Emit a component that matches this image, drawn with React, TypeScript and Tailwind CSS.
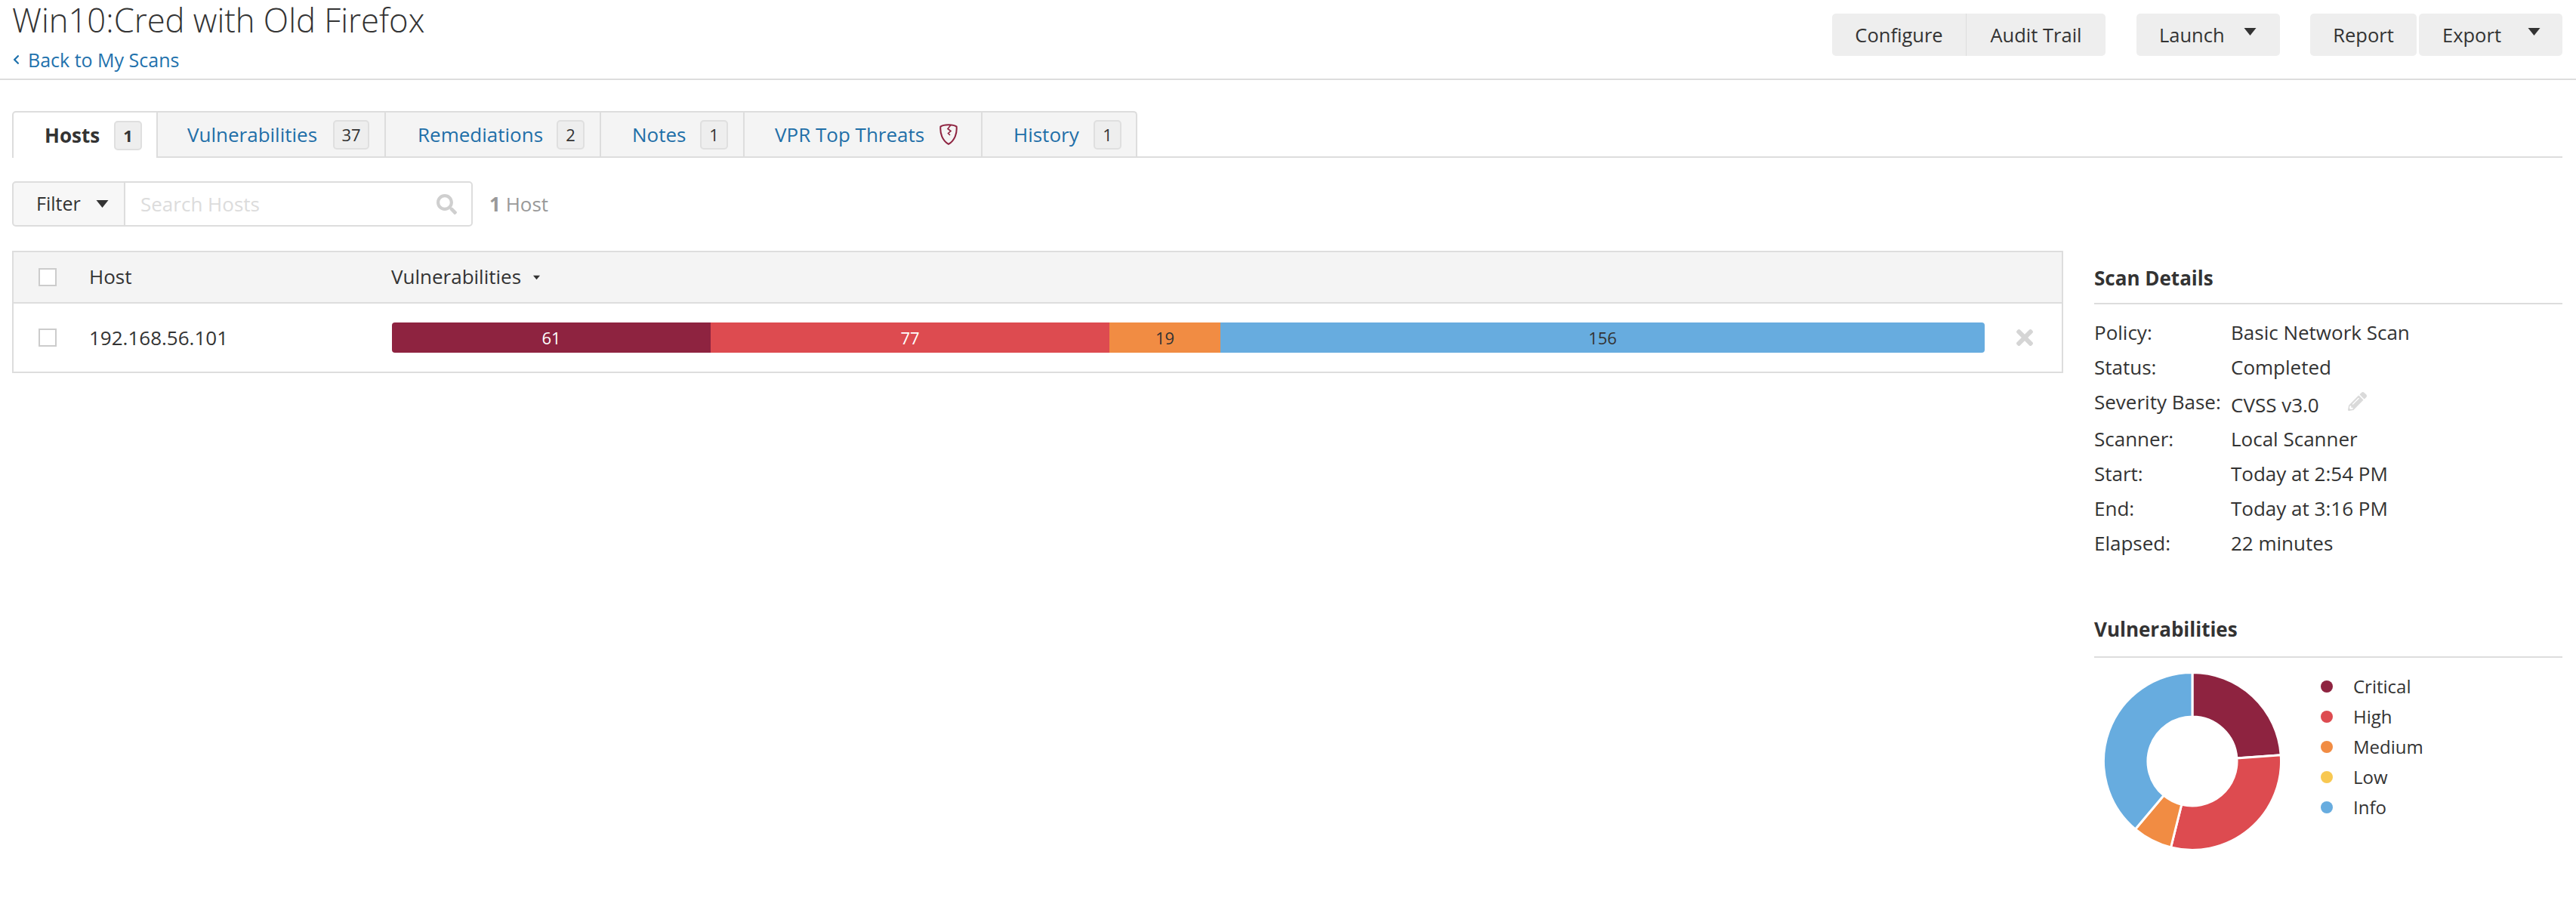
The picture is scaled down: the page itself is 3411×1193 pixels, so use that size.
import { FaChevronLeft, FaPencilAlt, FaSearch, FaTimes } from "react-icons/fa";

const Caret = ({ className = "" }: { className?: string }) => (
  <svg viewBox="0 0 16 12" className={className} fill="currentColor">
    <path d="M0 1 H16 L8 11 Z" />
  </svg>
);

const Badge = ({ n, bold, w = "w-[37px]" }: { n: string; bold?: boolean; w?: string }) => (
  <span
    className={`${w} ml-auto h-[39px] flex items-center justify-center rounded-[5px] border-2 border-[#dfdfdf] bg-[#eeeeee] text-[22px] text-[#333333] ${bold ? "font-bold" : ""}`}
  >
    {n}
  </span>
);

const Shield = () => (
  <svg viewBox="0 0 24 28" className="ml-auto w-[24px] h-[28px]" fill="none" stroke="#8e2340" strokeWidth="2">
    <path d="M12 1.2 C7.5 1.2 3.5 2 1.4 3.6 C0.6 12 3.5 22 12 26.8 C20.5 22 23.4 12 22.6 3.6 C20.5 2 16.5 1.2 12 1.2 Z" />
    <path d="M15 1.6 L11 6.5 L15 9.5 L11.5 12.5 L14 15" strokeWidth="1.6" />
  </svg>
);

const details = [
  { label: "Policy:", value: "Basic Network Scan" },
  { label: "Status:", value: "Completed" },
  { label: "Severity Base:", value: "CVSS v3.0", edit: true },
  { label: "Scanner:", value: "Local Scanner" },
  { label: "Start:", value: "Today at 2:54 PM" },
  { label: "End:", value: "Today at 3:16 PM" },
  { label: "Elapsed:", value: "22 minutes" },
];

const legend = [
  { name: "Critical", color: "bg-[#8e2340]" },
  { name: "High", color: "bg-[#dd4b50]" },
  { name: "Medium", color: "bg-[#f18c43]" },
  { name: "Low", color: "bg-[#f8c851]" },
  { name: "Info", color: "bg-[#67acdf]" },
];

const slices = [
  { from: 0, to: 86, color: "#8e2340" },
  { from: 86, to: 194, color: "#dd4b50" },
  { from: 194, to: 220, color: "#f18c43" },
  { from: 220, to: 360, color: "#67acdf" },
];

function arc(from: number, to: number) {
  const R = 117.5;
  const r = 59;
  const pt = (rad: number, deg: number) => {
    const a = (deg * Math.PI) / 180;
    return `${118 + rad * Math.sin(a)} ${118 - rad * Math.cos(a)}`;
  };
  const large = to - from > 180 ? 1 : 0;
  return `M${pt(R, from)} A${R} ${R} 0 ${large} 1 ${pt(R, to)} L${pt(r, to)} A${r} ${r} 0 ${large} 0 ${pt(r, from)} Z`;
}

export default function App() {
  return (
    <div className="w-[3411px] h-[1193px] overflow-hidden bg-white text-[#333333] font-['Open_Sans',sans-serif]">
      {/* page header */}
      <div className="h-[106px] border-b-2 border-[#dddddd] pl-[16px] pr-[18px] flex justify-between">
        <div>
          <h1 className="text-[43.6px] leading-[52px] font-light">Win10:Cred with Old Firefox</h1>
          <a className="mt-[12px] flex items-center gap-[10px] text-[25px] leading-[30px] text-[#1f72ad]">
            <FaChevronLeft className="w-[11px] h-[14px]" />
            Back to My Scans
          </a>
        </div>
        <div className="pt-[18px] flex text-[25.5px] text-[#333333]">
          <div className="flex h-[56px] rounded-[5px] bg-[#eeeeee]">
            <span className="w-[178px] flex items-center justify-center border-r border-[#dddddd]">Configure</span>
            <span className="w-[184px] flex items-center justify-center">Audit Trail</span>
          </div>
          <div className="ml-[41px] w-[190px] h-[56px] rounded-[5px] bg-[#eeeeee] flex items-center pl-[30px]">
            Launch
            <Caret className="ml-[25px] mb-[8px] w-[17px] h-[12px]" />
          </div>
          <div className="ml-[40px] w-[141px] h-[56px] rounded-[5px] bg-[#eeeeee] flex items-center justify-center">Report</div>
          <div className="ml-[3px] w-[190px] h-[56px] rounded-[5px] bg-[#eeeeee] flex items-center pl-[31px]">
            Export
            <Caret className="ml-[35px] mb-[8px] w-[17px] h-[12px]" />
          </div>
        </div>
      </div>

      <div className="pl-[16px] pr-[18px]">
        {/* tabs */}
        <div className="mt-[41px] h-[62px] flex border-b-2 border-[#dddddd] text-[26px] text-[#1f6fa8]">
          <div className="w-[193px] -mb-[2px] bg-white rounded-tl-[5px] border-2 border-b-0 border-[#dddddd] flex items-center pl-[41px] pr-[19px] text-[#333333] font-bold">
            Hosts
            <Badge n="1" bold />
          </div>
          <div className="w-[302px] bg-[#f4f4f4] border-t-2 border-r-2 border-[#dddddd] flex items-center pl-[39px] pr-[20px]">
            Vulnerabilities
            <Badge n="37" w="w-[48px]" />
          </div>
          <div className="w-[285px] bg-[#f4f4f4] border-t-2 border-r-2 border-[#dddddd] flex items-center pl-[42px] pr-[20px]">
            Remediations
            <Badge n="2" />
          </div>
          <div className="w-[190px] bg-[#f4f4f4] border-t-2 border-r-2 border-[#dddddd] flex items-center pl-[41px] pr-[20px]">
            Notes
            <Badge n="1" />
          </div>
          <div className="w-[315px] bg-[#f4f4f4] border-t-2 border-r-2 border-[#dddddd] flex items-center pl-[40px] pr-[31px]">
            VPR Top Threats
            <Shield />
          </div>
          <div className="w-[205px] bg-[#f4f4f4] border-t-2 border-r-2 rounded-tr-[5px] border-[#dddddd] flex items-center pl-[41px] pr-[19px]">
            History
            <Badge n="1" />
          </div>
        </div>

        {/* filter */}
        <div className="mt-[31px] flex items-center">
          <div className="w-[150px] h-[60px] rounded-l-[5px] border-2 border-[#dddddd] bg-[#f7f7f7] flex items-center pl-[30px] text-[25px]">
            Filter
            <Caret className="ml-[20px] w-[17px] h-[12px]" />
          </div>
          <div className="w-[462px] h-[60px] -ml-[2px] rounded-r-[5px] border-2 border-[#dddddd] bg-white flex items-center justify-between pl-[20px] pr-[19px] text-[26px] text-[#dcdcdc]">
            Search Hosts
            <FaSearch className="w-[27px] h-[27px] text-[#cfcfcf]" />
          </div>
          <div className="ml-[22px] text-[26px] text-[#999999]">
            <span className="font-bold">1</span> Host
          </div>
        </div>

        <div className="mt-[32px] flex justify-between">
          {/* hosts table */}
          <div className="w-[2716px] h-[162px] border-2 border-[#dddddd] text-[26px]">
            <div className="h-[68px] bg-[#f4f4f4] border-b-2 border-[#dddddd] flex items-center">
              <span className="ml-[33px] w-[24px] h-[24px] border-2 border-[#cccccc] bg-white" />
              <span className="ml-[43px] w-[400px] pb-[2px]">Host</span>
              <span className="pb-[2px]">Vulnerabilities</span>
              <Caret className="ml-[16px] w-[9px] h-[7px]" />
            </div>
            <div className="h-[90px] flex items-center">
              <span className="ml-[33px] w-[24px] h-[24px] border-2 border-[#cccccc] bg-white" />
              <span className="ml-[43px] w-[401px]">192.168.56.101</span>
              <div className="flex w-[2109px] h-[40px] rounded-[4px] overflow-hidden text-[22px]">
                <div className="w-[422px] bg-[#8e2340] text-white flex items-center justify-center">61</div>
                <div className="w-[528px] bg-[#dd4b50] text-white flex items-center justify-center">77</div>
                <div className="w-[147px] bg-[#f18c43] flex items-center justify-center">19</div>
                <div className="flex-1 bg-[#67acdf] flex items-center justify-center">156</div>
              </div>
              <FaTimes className="ml-[42px] w-[22px] h-[32px] text-[#d5d5d5]" />
            </div>
          </div>

          {/* right panel */}
          <div className="w-[620px] text-[26px]">
            <h3 className="h-[71px] pt-[3px] border-b-2 border-[#dddddd] flex items-center font-bold">Scan Details</h3>
            <div className="mt-[14px]">
              {details.map((d) => (
                <div key={d.label} className={`flex ${d.edit ? "h-[49px]" : "h-[46px]"} items-start leading-[46px]`}>
                  <span className="w-[181px] shrink-0">{d.label}</span>
                  <span className={d.edit ? "pt-[4px]" : ""}>{d.value}</span>
                  {d.edit && <FaPencilAlt className="ml-[38px] mt-[10px] w-[25px] h-[25px] text-[#dadada]" />}
                </div>
              ))}
            </div>

            <h3 className="mt-[67px] h-[62px] pb-[12px] border-b-2 border-[#dddddd] flex items-center font-bold">Vulnerabilities</h3>
            <div className="mt-[18px] flex text-[24px]">
              <svg width="236" height="236" viewBox="0 0 236 236" className="ml-[12px] mt-[1px] shrink-0">
                {slices.map((s) => (
                  <path key={s.from} d={arc(s.from, s.to)} fill={s.color} stroke="#ffffff" strokeWidth="3" />
                ))}
              </svg>
              <div className="ml-[52px]">
                {legend.map((l) => (
                  <div key={l.name} className="h-[40px] flex items-center">
                    <span className={`w-[16px] h-[16px] rounded-full ${l.color}`} />
                    <span className="ml-[27px]">{l.name}</span>
                  </div>
                ))}
              </div>
            </div>
          </div>
        </div>
      </div>
    </div>
  );
}
